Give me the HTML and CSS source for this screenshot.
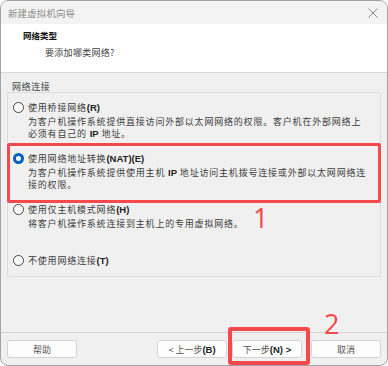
FILE: index.html
```html
<!DOCTYPE html>
<html lang="zh-CN">
<head>
<meta charset="utf-8">
<title>新建虚拟机向导</title>
<link rel="stylesheet" href="styles.css">
</head>
<body>
<div class="window">
  <div class="titlebar">
    <span class="title">新建虚拟机向导</span>
    <svg class="close" width="10" height="10" viewBox="0 0 10 10"><path d="M0.5 0.5 L9.5 9.5 M9.5 0.5 L0.5 9.5" stroke="#8a8a8a" stroke-width="1" fill="none"/></svg>
  </div>
  <div class="header">
    <div class="h-title">网络类型</div>
    <div class="h-sub">要添加哪类网络?</div>
  </div>
  <div class="body">
    <div class="group-label">网络连接</div>
    <div class="groupbox">
      <div class="option">
        <div class="opt-row"><span class="radio"></span><span class="label">使用桥接网络<b class="lat">(R)</b></span></div>
        <div class="desc">为客户机操作系统提供直接访问外部以太网网络的权限。客户机在外部网络上<br>必须有自己的 <b class="lat">IP</b> 地址。</div>
      </div>
      <div class="option">
        <div class="opt-row"><span class="radio checked"></span><span class="label">使用网络地址转换<b class="lat">(NAT)(E)</b></span></div>
        <div class="desc">为客户机操作系统提供使用主机 <b class="lat">IP</b> 地址访问主机拨号连接或外部以太网网络连<br>接的权限。</div>
      </div>
      <div class="option">
        <div class="opt-row"><span class="radio"></span><span class="label">使用仅主机模式网络<b class="lat">(H)</b></span></div>
        <div class="desc">将客户机操作系统连接到主机上的专用虚拟网络。</div>
      </div>
      <div class="option last">
        <div class="opt-row"><span class="radio"></span><span class="label">不使用网络连接<b class="lat">(T)</b></span></div>
      </div>
      <div class="mark mark1"></div>
      <div class="num num1">1</div>
    </div>
  </div>
  <div class="footer">
    <button class="btn">帮助</button>
    <span class="spacer"></span>
    <button class="btn">&lt; 上一步<b class="lat">(B)</b></button>
    <button class="btn next">下一步<b class="lat">(N) &gt;</b></button>
    <button class="btn cancel">取消</button>
    <div class="mark mark2"></div>
    <div class="num num2">2</div>
  </div>
</div>
</body>
</html>
```
FILE: styles.css
```css
* { box-sizing: border-box; }
html, body { margin: 0; padding: 0; background: #ffffff; }
body {
  width: 388px;
  height: 366px;
  font-family: "Noto Sans CJK SC", "Noto Sans", sans-serif;
  color: #3a3a3a;
}
.window {
  width: 388px;
  height: 366px;
  border: 1px solid #a3a3a3;
  border-radius: 8px;
  overflow: hidden;
  background: #f0f0f0;
  display: flex;
  flex-direction: column;
}
.titlebar {
  height: 23px;
  flex: none;
  display: flex;
  align-items: center;
  justify-content: space-between;
  padding: 0 9px 0 7px;
  background: #f3f3f3;
}
.title {
  font-size: 9.5px;
  color: #8c8c8c;
  letter-spacing: 0.1px;
}
.close { display: block; }
.header {
  height: 49px;
  flex: none;
  background: #ffffff;
  border-bottom: 1px solid #d9d9d9;
  padding: 5px 0 0 22px;
}
.h-title {
  font-size: 8.5px;
  line-height: 12px;
  font-weight: bold;
  color: #111;
}
.h-sub {
  font-size: 9px;
  line-height: 12px;
  margin: 6px 0 0 22px;
  color: #444;
  letter-spacing: 0.3px;
}
.body {
  flex: 1;
  padding: 8px 6px 0 6px;
}
.group-label {
  font-size: 9px;
  line-height: 12px;
  letter-spacing: 0.6px;
  margin-left: 5px;
  color: #444;
}
.groupbox {
  position: relative;
  margin-top: -1px;
  height: 185px;
  border: 1px solid #dcdcdc;
  border-radius: 2px;
  padding: 7px 0 0 5px;
}
.option { height: 51px; }
.option.last { height: auto; }
.opt-row {
  display: flex;
  align-items: center;
  height: 14px;
}
.radio {
  width: 11px;
  height: 11px;
  border: 1px solid #444;
  border-radius: 50%;
  background: #fff;
  flex: none;
  margin-right: 4px;
}
.radio.checked {
  border: 3px solid #0060c0;
  background: #fff;
}
.label, .desc {
  font-size: 9px;
  letter-spacing: 0.8px;
  color: #3c3c3c;
}
.desc {
  line-height: 12px;
  margin: 2px 0 0 15px;
}
.lat {
  font-family: "Liberation Sans", Arial, sans-serif;
  font-weight: bold;
  letter-spacing: 0;
  font-size: 9.5px;
  color: #222;
}
.mark {
  position: absolute;
  border: 3px solid #f4494d;
  border-radius: 2px;
}
.mark1 {
  top: 50px;
  left: -1px;
  right: -1px;
  height: 60px;
}
.num {
  position: absolute;
  font-family: "Open Sans", "DejaVu Sans", sans-serif;
  font-weight: normal;
  color: #f4494d;
  font-size: 27px;
  line-height: 27px;
}
.num1 { left: 245px; top: 111px; }
.footer {
  position: relative;
  height: 33px;
  flex: none;
  border-top: 1px solid #d4d4d4;
  display: flex;
  align-items: flex-start;
  padding: 7px 6px 0 6px;
}
.spacer { flex: 1; }
.btn {
  width: 70px;
  height: 18px;
  margin: 0;
  padding: 0;
  border: 1px solid #d3d3d3;
  border-radius: 3px;
  background: #fdfdfd;
  font-family: "Noto Sans CJK SC", sans-serif;
  font-size: 9px;
  color: #555;
  display: flex;
  align-items: center;
  justify-content: center;
}
.btn .lat { font-size: 9.5px; }
.next { margin-left: 5px; }
.cancel { margin-left: 9px; }
.mark2 {
  border-width: 4px;
  border-radius: 3px;
  left: 227px;
  top: -6px;
  width: 82px;
  height: 38px;
}
.num2 { left: 323px; top: -23px; }
```
